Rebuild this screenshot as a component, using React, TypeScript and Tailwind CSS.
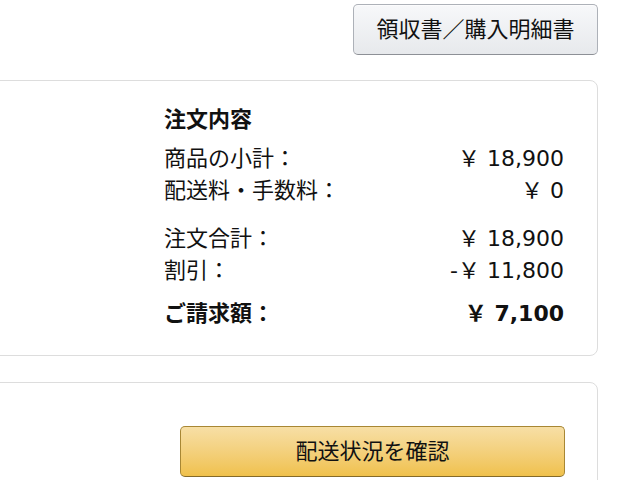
import React from "react";

const font = { fontFamily: '"DejaVu Sans", "Noto Sans CJK JP", sans-serif' };

function Row({ label, value, bold = false }: { label: string; value: string; bold?: boolean }) {
  return (
    <div className={`flex justify-between h-[32px] leading-[32px] ${bold ? "font-bold" : ""}`}>
      <span>{label}</span>
      <span>{value}</span>
    </div>
  );
}

export default function App() {
  return (
    <div className="w-[640px] h-[480px] overflow-hidden bg-white text-[#111] text-[22px]" style={font}>
      <div className="flex justify-end pr-[42px] pt-[4px]">
        <button className="w-[245px] h-[51px] rounded-[5px] border border-[#adb1b8] border-b-[#8d9096] bg-gradient-to-b from-[#f7f8fa] to-[#e7e9ec] text-[22px] text-[#111] shadow-[inset_0_1px_0_rgba(255,255,255,0.6)]">
          領収書／購入明細書
        </button>
      </div>

      <div className="mt-[25px] -ml-[10px] mr-[42px] h-[276px] rounded-[8px] border border-[#dddddd] pt-[23px] pr-[33px] flex justify-end">
        <div className="w-[400px]">
          <div className="h-[32px] leading-[32px] font-bold">注文内容</div>
          <div className="mt-[7px]">
            <Row label="商品の小計：" value="￥ 18,900" />
            <Row label="配送料・手数料：" value="￥ 0" />
          </div>
          <div className="mt-[16px]">
            <Row label="注文合計：" value="￥ 18,900" />
            <Row label="割引：" value="-￥ 11,800" />
          </div>
          <div className="mt-[11px]">
            <Row label="ご請求額：" value="￥ 7,100" bold />
          </div>
        </div>
      </div>

      <div className="mt-[26px] -ml-[10px] mr-[42px] h-[140px] rounded-[8px] border border-[#dddddd] pt-[43px] pr-[32px] flex justify-end">
        <button className="w-[385px] h-[51px] rounded-[5px] border border-[#a88734] border-b-[#846a29] bg-gradient-to-b from-[#f7dfa5] to-[#f0c14b] text-[22px] text-[#111]">
          配送状況を確認
        </button>
      </div>
    </div>
  );
}
